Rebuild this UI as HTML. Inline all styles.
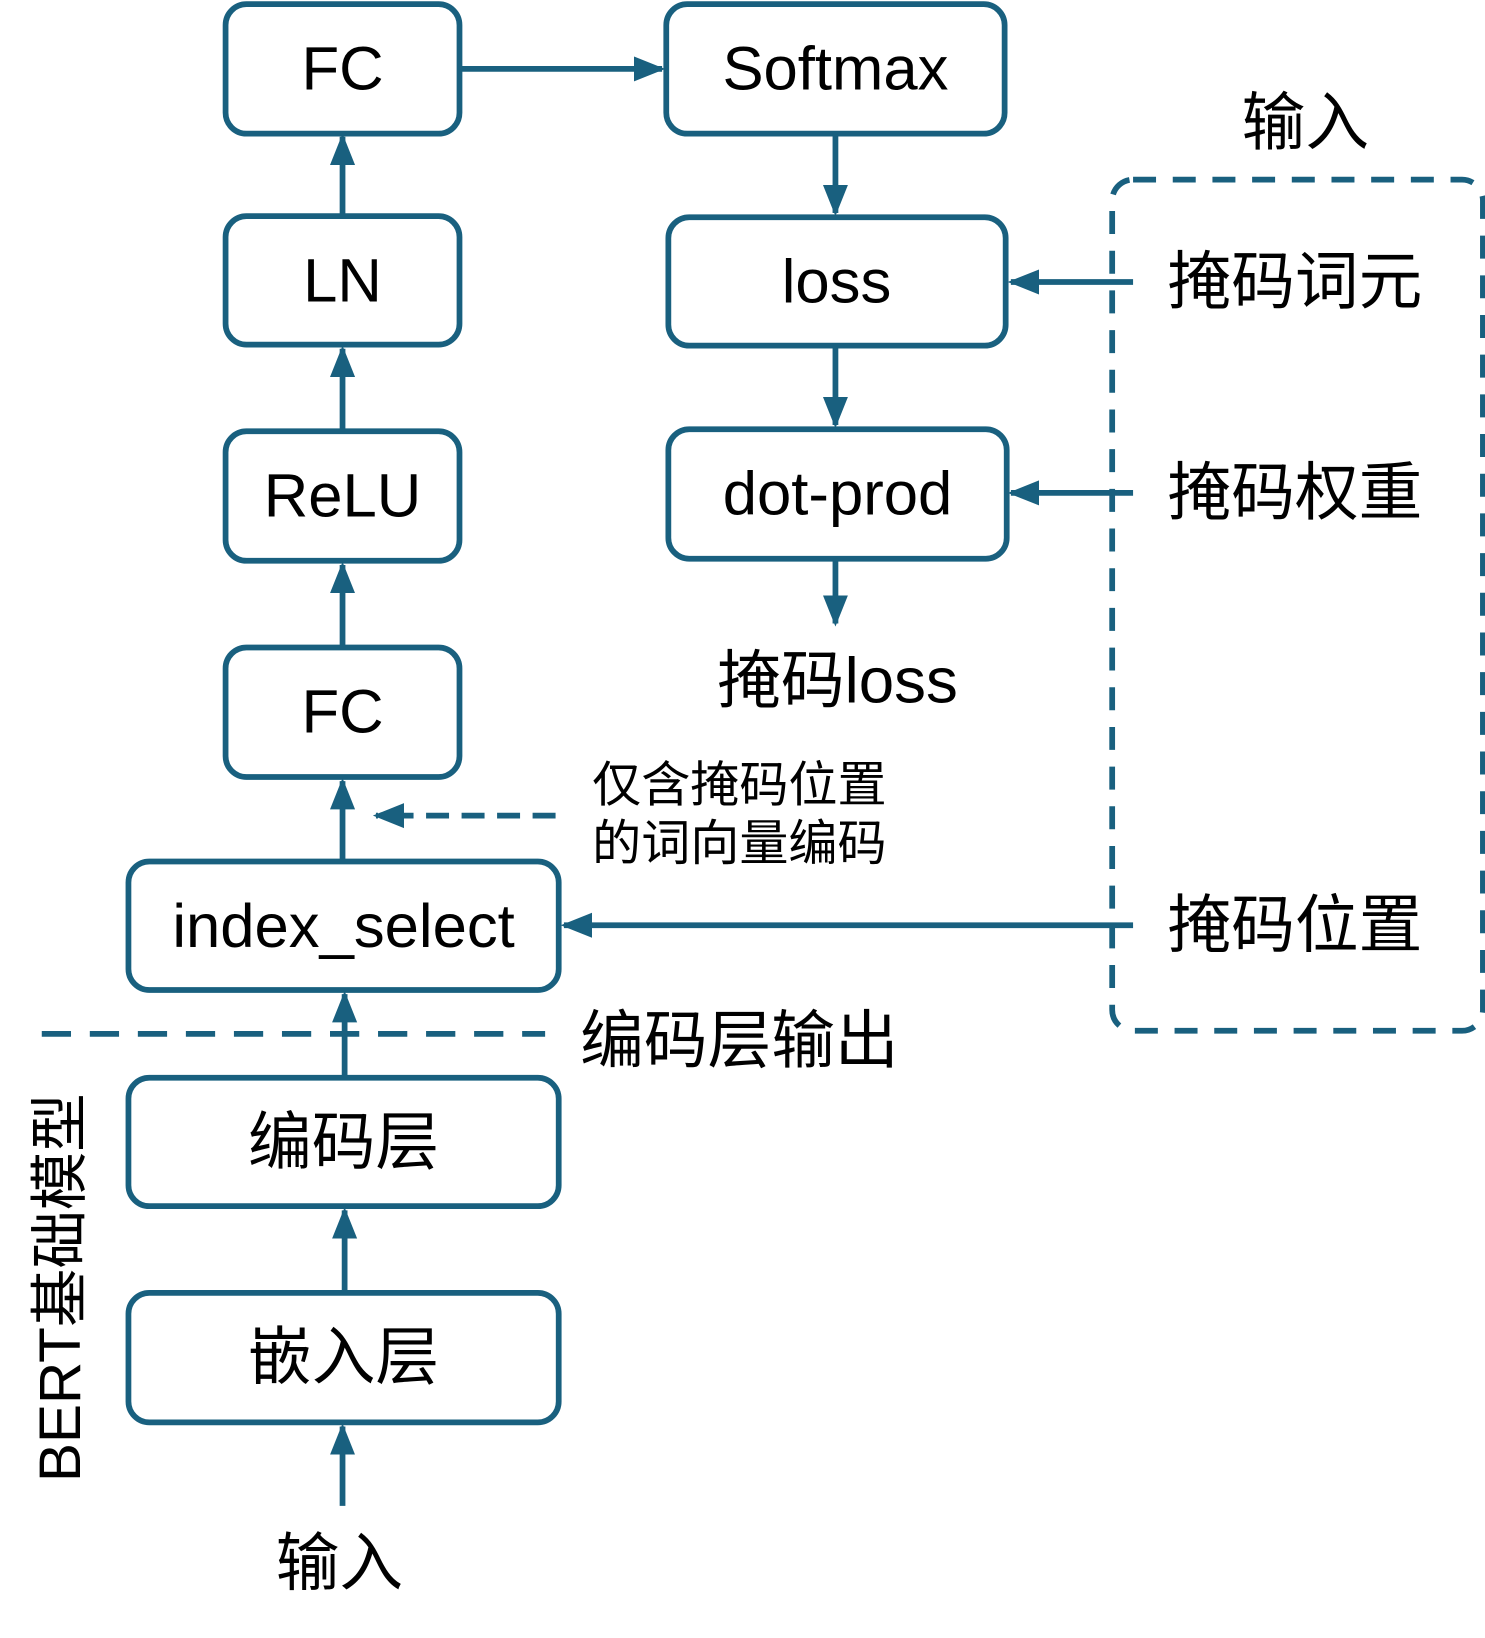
<!DOCTYPE html>
<html><head><meta charset="utf-8"><style>html,body{margin:0;padding:0;background:#fff}svg{display:block}
text{font-family:"Liberation Sans","Noto Sans CJK SC",sans-serif;fill:#000;text-anchor:middle;dominant-baseline:central}</style></head>
<body>
<svg width="1485" height="1638" viewBox="0 0 1422 1568.5" xmlns="http://www.w3.org/2000/svg">
<defs>
<marker id="h" viewBox="0 0 10 10" refX="9" refY="5" markerWidth="30" markerHeight="30" markerUnits="userSpaceOnUse" orient="auto"><path d="M0,1 L10,5 L0,9z" fill="#19607f"/></marker></defs>
<g fill="none" stroke="#19607f" stroke-width="5.5">
<rect x="216" y="4" width="224" height="124" rx="20"/>
<rect x="638" y="4" width="324" height="124" rx="20"/>
<rect x="216" y="207" width="224" height="123" rx="20"/>
<rect x="640" y="208" width="323" height="123" rx="20"/>
<rect x="216" y="413" width="224" height="124" rx="20"/>
<rect x="640" y="411" width="324" height="124" rx="20"/>
<rect x="216" y="620" width="224" height="124" rx="20"/>
<rect x="123" y="825" width="412" height="123" rx="20"/>
<rect x="123" y="1032" width="412" height="123" rx="20"/>
<rect x="123" y="1238" width="412" height="124" rx="20"/>
<rect x="1065" y="172" width="355" height="815" rx="20" stroke-dasharray="22,16"/>
<line x1="40" y1="990" x2="522" y2="990" stroke-dasharray="28,18"/>
<g marker-end="url(#h)">
<line x1="440" y1="66" x2="634" y2="66"/>
<line x1="800" y1="128" x2="800" y2="204"/>
<line x1="800" y1="331" x2="800" y2="407"/>
<line x1="800" y1="535" x2="800" y2="597"/>
<line x1="328" y1="207" x2="328" y2="131"/>
<line x1="328" y1="413" x2="328" y2="334"/>
<line x1="328" y1="620" x2="328" y2="541"/>
<line x1="328" y1="825" x2="328" y2="748"/>
<line x1="330" y1="1032" x2="330" y2="952"/>
<line x1="330" y1="1238" x2="330" y2="1159"/>
<line x1="328" y1="1442" x2="328" y2="1366"/>
<line x1="532" y1="781" x2="360" y2="781" stroke-dasharray="22,12"/>
<line x1="1085" y1="886" x2="540" y2="886"/>
<line x1="1085" y1="270" x2="968" y2="270"/>
<line x1="1085" y1="472" x2="968" y2="472"/>
</g></g>
<g font-size="59">
<text x="328" y="66">FC</text>
<text x="800" y="66">Softmax</text>
<text x="328" y="269">LN</text>
<text x="801" y="270">loss</text>
<text x="328" y="475">ReLU</text>
<text x="802" y="473">dot-prod</text>
<text x="328" y="682">FC</text>
<text x="329" y="887">index_select</text>
<text x="329" y="1094" font-size="61">编码层</text>
<text x="329" y="1300" font-size="61">嵌入层</text>
<text x="1250" y="118" font-size="61">输入</text>
<text x="1240" y="270" font-size="61">掩码词元</text>
<text x="1240" y="472" font-size="61">掩码权重</text>
<text x="1240" y="886" font-size="61">掩码位置</text>
<text x="802" y="652" font-size="61">掩码loss</text>
<text x="708" y="752" font-size="47">仅含掩码位置</text>
<text x="708" y="808" font-size="47">的词向量编码</text>
<text x="708" y="997" font-size="61">编码层输出</text>
<text x="325" y="1497" font-size="61">输入</text>
<text x="58" y="1233" font-size="56" transform="rotate(-90 58 1233)">BERT基础模型</text>
</g>
</svg>
</body></html>
